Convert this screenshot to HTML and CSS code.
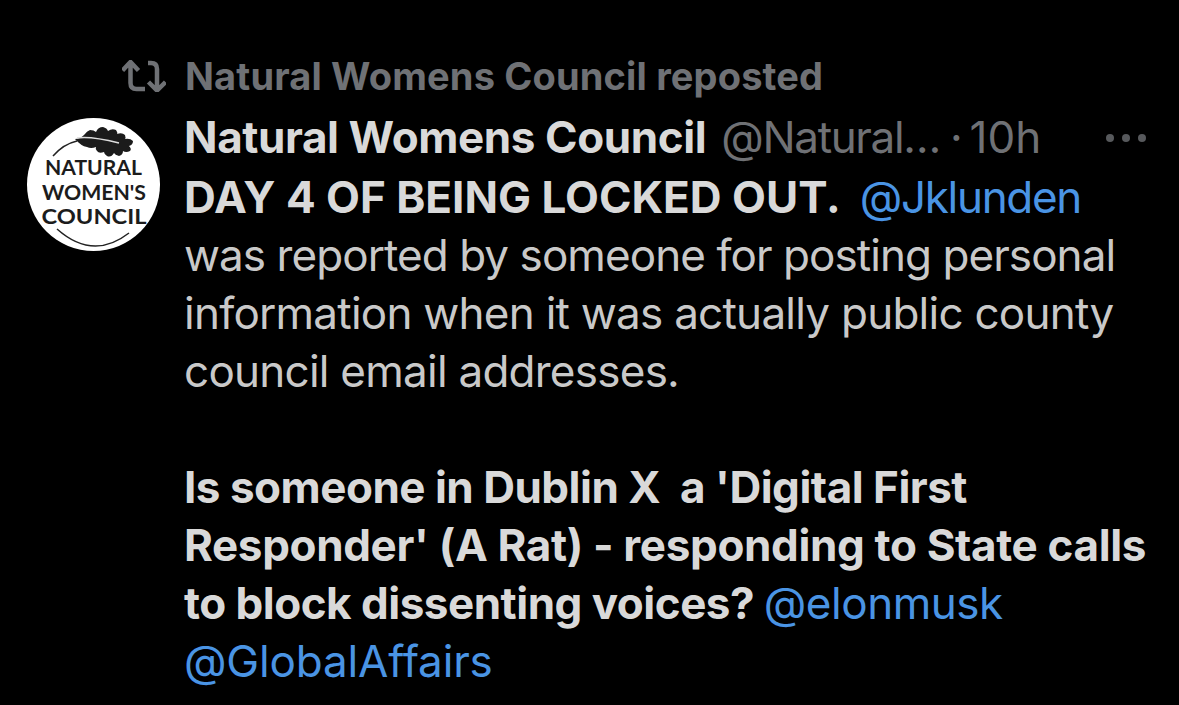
FILE: index.html
```html
<!DOCTYPE html>
<html lang="en">
<head>
<meta charset="utf-8">
<title>Repost</title>
<link rel="stylesheet" href="styles.css">
</head>
<body>
<article class="post">
  <div class="repost">
    <svg class="repost-icon" viewBox="0 0 44 32" aria-hidden="true">
      <path d="M0.500 10.500 L8.500 2 L16.500 10.500 M8.500 3 V23 Q8.500 29 14.500 29 H23" />
      <path d="M26 3 H29 Q35 3 35 9 V29 M26.500 22 L35 30.500 L43.500 22" />
    </svg>
    <span>Natural Womens Council reposted</span>
  </div>
  <div class="main">
    <svg class="avatar" viewBox="0 0 133 133" role="img" aria-label="Natural Women's Council logo">
      <circle cx="66.500" cy="66.500" r="66.500" fill="#fff"/>
      <path class="leaf" d="M48 21 Q53 21 57 17 Q60 13 63 12 Q67 12 69 14 Q71 9 76 9 Q80 10 81 13 Q85 10 89 12 Q91 15 90 16 Q95 14 98 17 Q99 20 98 21 Q103 20 106 23 Q106 27 102 28 Q105 31 103 33 Q99 35 96 33 Q96 37 92 38 Q88 37 87 35 Q84 40 80 38 Q77 36 77 34 Q72 36 70 33 Q68 31 69 29 Q64 31 60 29 Q54 28 48 21 Z"/>
      <path class="stem" d="M26 38 C33 30 41 25 50 23"/>
      <path class="vein" d="M50 20 C62 18 76 21 92 25"/>
      <text class="logo-text" x="66.500" y="57" textLength="97" lengthAdjust="spacingAndGlyphs">NATURAL</text>
      <text class="logo-text" x="67" y="82" textLength="104" lengthAdjust="spacingAndGlyphs">WOMEN'S</text>
      <text class="logo-text" x="67" y="106" textLength="105" lengthAdjust="spacingAndGlyphs">COUNCIL</text>
      <path class="smile" d="M30 111 Q66 143 102 115"/>
    </svg>
    <div class="content">
      <header class="head">
        <span class="name">Natural Womens Council</span>
        <span class="handle">@Natural…</span>
        <span class="dot">·</span>
        <span class="time">10h</span>
        <span class="more"><i></i><i></i><i></i></span>
      </header>
      <div class="body">
        <div><b class="shout">DAY 4 OF BEING LOCKED OUT.</b><a class="mention-a">@Jklunden</a></div>
        <div class="tight">was reported by someone for posting personal</div>
        <div>information when it was actually public county</div>
        <div>council email addresses.</div>
        <div class="blank"></div>
        <div><b class="snug">Is someone in Dublin X&nbsp; a 'Digital First</b></div>
        <div><b>Responder' (A Rat) - responding to State calls</b></div>
        <div><b class="snug">to block dissenting voices?</b> <a class="mention-b">@elonmusk</a></div>
        <div><a class="mention-c">@GlobalAffairs</a></div>
      </div>
    </div>
  </div>
</article>
</body>
</html>
```
FILE: styles.css
```css
html, body {
  margin: 0;
  padding: 0;
  height: 100%;
  background: #000;
  overflow: hidden;
}
body {
  font-family: Inter, "Liberation Sans", sans-serif;
  color: #d9d9d9;
}
.post {
  display: flex;
  flex-direction: column;
  padding: 53px 0 0 27px;
}
.repost {
  display: flex;
  align-items: center;
  gap: 19px;
  height: 45px;
  padding-left: 95px;
  font-size: 38px;
  font-weight: 700;
  letter-spacing: 0.15px;
  color: #6f7175;
  white-space: nowrap;
}
.repost-icon {
  width: 44px;
  height: 32px;
  flex: none;
}
.repost-icon path {
  fill: none;
  stroke: #6f7175;
  stroke-width: 4.500;
}
.main {
  display: flex;
  gap: 25px;
  margin-top: 20px;
}
.avatar {
  width: 133px;
  height: 133px;
  flex: none;
}
.leaf { fill: #1b1b1b; }
.stem, .smile { fill: none; stroke: #222; stroke-width: 1.500; }
.vein { fill: none; stroke: #ddd; stroke-width: 1.500; }
.logo-text {
  font-family: Lato, "Liberation Sans", sans-serif;
  font-size: 21px;
  font-weight: 700;
  fill: #1c1c1c;
  text-anchor: middle;
}
.content {
  width: 975px;
  margin-left: -1px;
  margin-top: -10px;
}
.head {
  display: flex;
  align-items: center;
  height: 58px;
  font-size: 44px;
  white-space: nowrap;
}
.name {
  font-weight: 700;
  letter-spacing: -0.4px;
  color: #d9d9d9;
}
.handle, .time, .dot {
  color: #6f7175;
  font-weight: 400;
}
.handle { margin-left: 15px; letter-spacing: -1.35px; }
.dot { margin-left: 10px; }
.time { margin-left: 7px; letter-spacing: 0; }
.more {
  display: flex;
  gap: 8px;
  margin-left: 65px;
  margin-top: 1px;
}
.more i {
  width: 8px;
  height: 8px;
  border-radius: 50%;
  background: #57595c;
}
.body {
  margin-top: 2px;
  font-size: 44px;
  line-height: 58px;
  letter-spacing: -0.75px;
  white-space: nowrap;
  color: #c9c9c9;
}
.tight { letter-spacing: -0.93px; }
.blank { height: 58px; }
.body b {
  font-weight: 700;
  letter-spacing: -0.35px;
  color: #d9d9d9;
}
.body a {
  color: #4a94e4;
  letter-spacing: -0.45px;
}
.body .shout { letter-spacing: 0; margin-right: 19px; }
.body .snug { letter-spacing: -0.5px; }
.body .mention-a { letter-spacing: -1.3px; }
.body .mention-b { margin-left: -2px; }
.body .mention-c { letter-spacing: -0.15px; }
```
